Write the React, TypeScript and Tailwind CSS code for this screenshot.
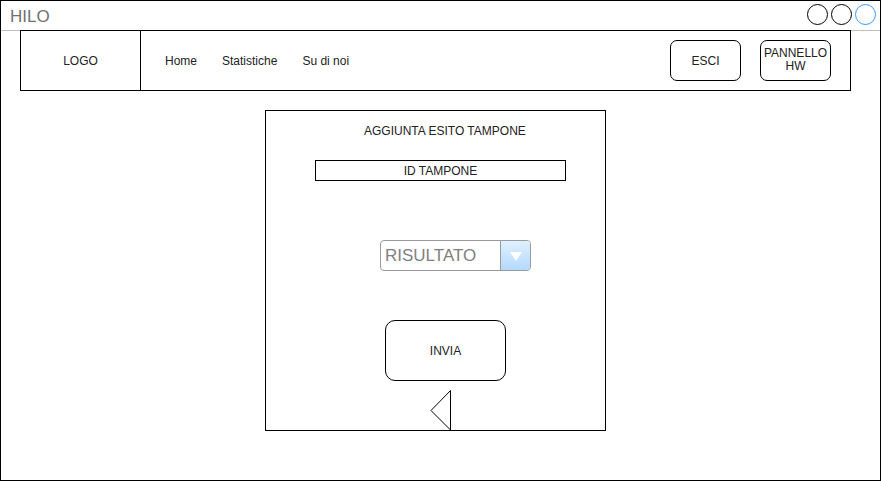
import React from 'react';

const font = { fontFamily: '"Liberation Sans", Arial, sans-serif' };

const WindowDot = ({ blue }: { blue?: boolean }) => (
  <div
    className={
      'w-[21px] h-[21px] rounded-full border bg-white ' +
      (blue ? 'border-[#3399ff]' : 'border-black')
    }
  />
);

export default function App() {
  const links = ['Home', 'Statistiche', 'Su di noi'];

  return (
    <div
      className="w-[881px] h-[481px] border border-black bg-white flex flex-col overflow-hidden"
      style={font}
    >
      {/* Title bar */}
      <div className="h-[30px] shrink-0 border-b border-[#c0c0c0] flex items-center justify-between">
        <span className="ml-[9px] mt-[2px] text-[17px] text-[#707070] leading-none">HILO</span>
        <div className="flex gap-[3px] mr-[4px] mb-[2px]">
          <WindowDot />
          <WindowDot />
          <WindowDot blue />
        </div>
      </div>

      {/* Nav */}
      <div className="-mt-px ml-[19px] w-[831px] h-[61px] shrink-0 border border-black flex items-center">
        <div className="w-[120px] h-full border-r border-black flex items-center justify-center text-[12px] text-[#222]">
          LOGO
        </div>
        <div className="flex gap-[25px] pl-[24px] text-[12px] text-[#222]">
          {links.map((l) => (
            <span key={l}>{l}</span>
          ))}
        </div>
        <div className="ml-auto mr-[19px] flex gap-[19px]">
          <button className="w-[71px] h-[41px] rounded-[7px] border border-black text-[12px] text-[#222]">
            ESCI
          </button>
          <button className="w-[71px] h-[41px] rounded-[7px] border border-black text-[12px] leading-[13px] text-[#222] pb-[2px]">
            PANNELLO
            <br />
            HW
          </button>
        </div>
      </div>

      {/* Main panel */}
      <div className="mt-[19px] ml-[264px] w-[341px] h-[321px] border border-black flex flex-col text-[#222]">
        <div className="mt-[13px] ml-[98px] text-[12px] leading-[14px]">AGGIUNTA ESITO TAMPONE</div>

        <div className="mt-[22px] ml-[49px] w-[251px] h-[21px] border border-black flex items-center justify-center text-[12px]">
          ID TAMPONE
        </div>

        <div className="mt-[59px] ml-[114px] w-[151px] h-[31px] rounded-[4px] border border-[#9a9a9a] flex overflow-hidden">
          <div className="flex-1 flex items-center pl-[4px] text-[17px] text-[#808080]">RISULTATO</div>
          <div className="w-[30px] h-full border-l border-[#9a9a9a] bg-gradient-to-b from-[#e0f0ff] to-[#b3d9ff] flex items-center justify-center">
            <svg width="14" height="12" viewBox="0 0 14 12">
              <path d="M1 2 L13 2 L7 11 Z" fill="#ffffff" />
            </svg>
          </div>
        </div>

        <button className="mt-[49px] ml-[119px] w-[121px] h-[61px] rounded-[10px] border border-black text-[12px] text-[#222]">
          INVIA
        </button>

        <svg className="mt-[9px] ml-[164px]" width="22" height="40" viewBox="0 0 22 40">
          <path d="M20.5 0.5 L20.5 40 L1 20.5 Z" fill="white" stroke="black" strokeWidth="1" />
        </svg>
      </div>
    </div>
  );
}
